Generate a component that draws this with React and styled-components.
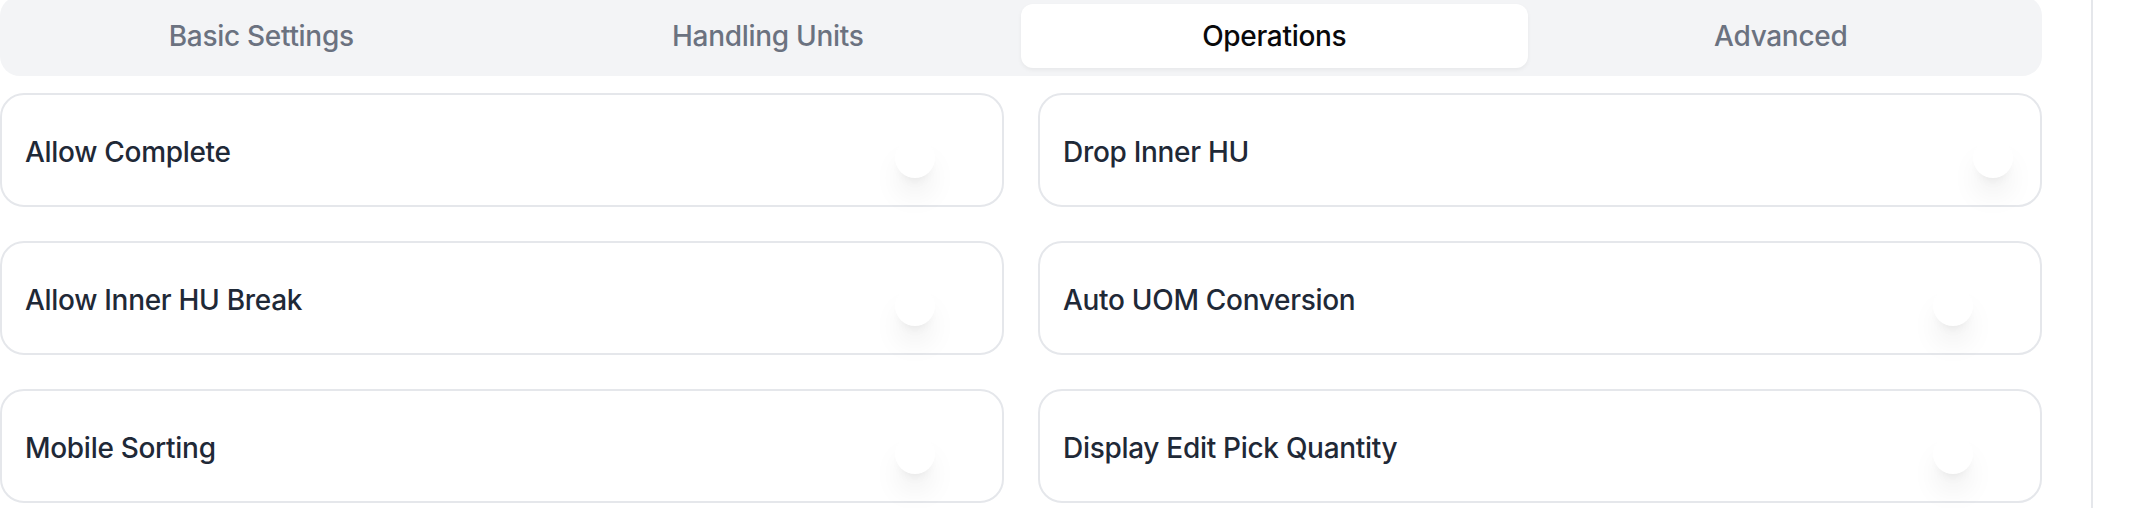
import React from "react"
import styled, { createGlobalStyle } from "styled-components"

const GlobalStyle = createGlobalStyle`
  body {
    margin: 0;
    background: #ffffff;
    font-family: Inter, "Noto Sans", sans-serif;
  }
`

const tabs = ["Basic Settings", "Handling Units", "Operations", "Advanced"]

const settings = [
  { label: "Allow Complete", checked: false },
  { label: "Drop Inner HU", checked: true },
  { label: "Allow Inner HU Break", checked: false },
  { label: "Auto UOM Conversion", checked: false },
  { label: "Mobile Sorting", checked: false },
  { label: "Display Edit Pick Quantity", checked: false },
]

const SettingCard = ({ label, checked }) => (
  <Card>
    <Label>{label}</Label>
    <Switch type="button" role="switch" aria-checked={checked}>
      <Thumb $checked={checked} />
    </Switch>
  </Card>
)

const App = () => (
  <>
    <GlobalStyle />
    <Page>
      <Main>
        <TabBar>
          {tabs.map(tab => (
            <Tab key={tab} $active={tab === "Operations"}>
              {tab}
            </Tab>
          ))}
        </TabBar>
        <Grid>
          {settings.map(s => (
            <SettingCard key={s.label} label={s.label} checked={s.checked} />
          ))}
        </Grid>
      </Main>
      <Aside />
    </Page>
  </>
)
export default App

const Page = styled.div`
  display: flex;
  height: 508px;
  overflow: hidden;
`

const Main = styled.main`
  width: 2042px;
  flex-shrink: 0;
  display: flex;
  flex-direction: column;
  gap: 17px;
  margin-top: -4px;
`

const Aside = styled.aside`
  flex: 1;
  margin-left: 49px;
  border-left: 2px solid #e5e7eb;
`

const TabBar = styled.nav`
  display: grid;
  grid-template-columns: repeat(4, 1fr);
  padding: 8px;
  background: #f3f4f6;
  border-radius: 20px;
`

const Tab = styled.div`
  height: 64px;
  display: flex;
  align-items: center;
  justify-content: center;
  font-size: 28px;
  font-weight: 500;
  letter-spacing: -0.3px;
  color: ${props => (props.$active ? "#09090b" : "#6b7280")};
  background: ${props => (props.$active ? "#ffffff" : "transparent")};
  border-radius: 12px;
  box-shadow: ${props =>
    props.$active ? "0 2px 4px rgba(0, 0, 0, 0.05)" : "none"};
`

const Grid = styled.div`
  display: grid;
  grid-template-columns: 1fr 1fr;
  gap: 34px;
`

const Card = styled.div`
  display: flex;
  align-items: center;
  justify-content: space-between;
  padding: 31px 23px;
  border: 2px solid #e5e7eb;
  border-radius: 24px;
  background: #ffffff;
`

const Label = styled.span`
  padding-top: 3px;
  font-size: 28px;
  font-weight: 500;
  line-height: 40px;
  letter-spacing: -0.3px;
  color: #1f2937;
`

const Switch = styled.button`
  position: relative;
  width: 88px;
  height: 48px;
  padding: 0;
  border: none;
  background: transparent;
  flex-shrink: 0;
`

const Thumb = styled.span`
  position: absolute;
  top: 12px;
  left: ${props => (props.$checked ? "44px" : "4px")};
  width: 40px;
  height: 40px;
  border-radius: 50%;
  background: #ffffff;
  box-shadow: 0 20px 30px -6px rgba(0, 0, 0, 0.1),
    0 8px 12px -8px rgba(0, 0, 0, 0.1);
`
